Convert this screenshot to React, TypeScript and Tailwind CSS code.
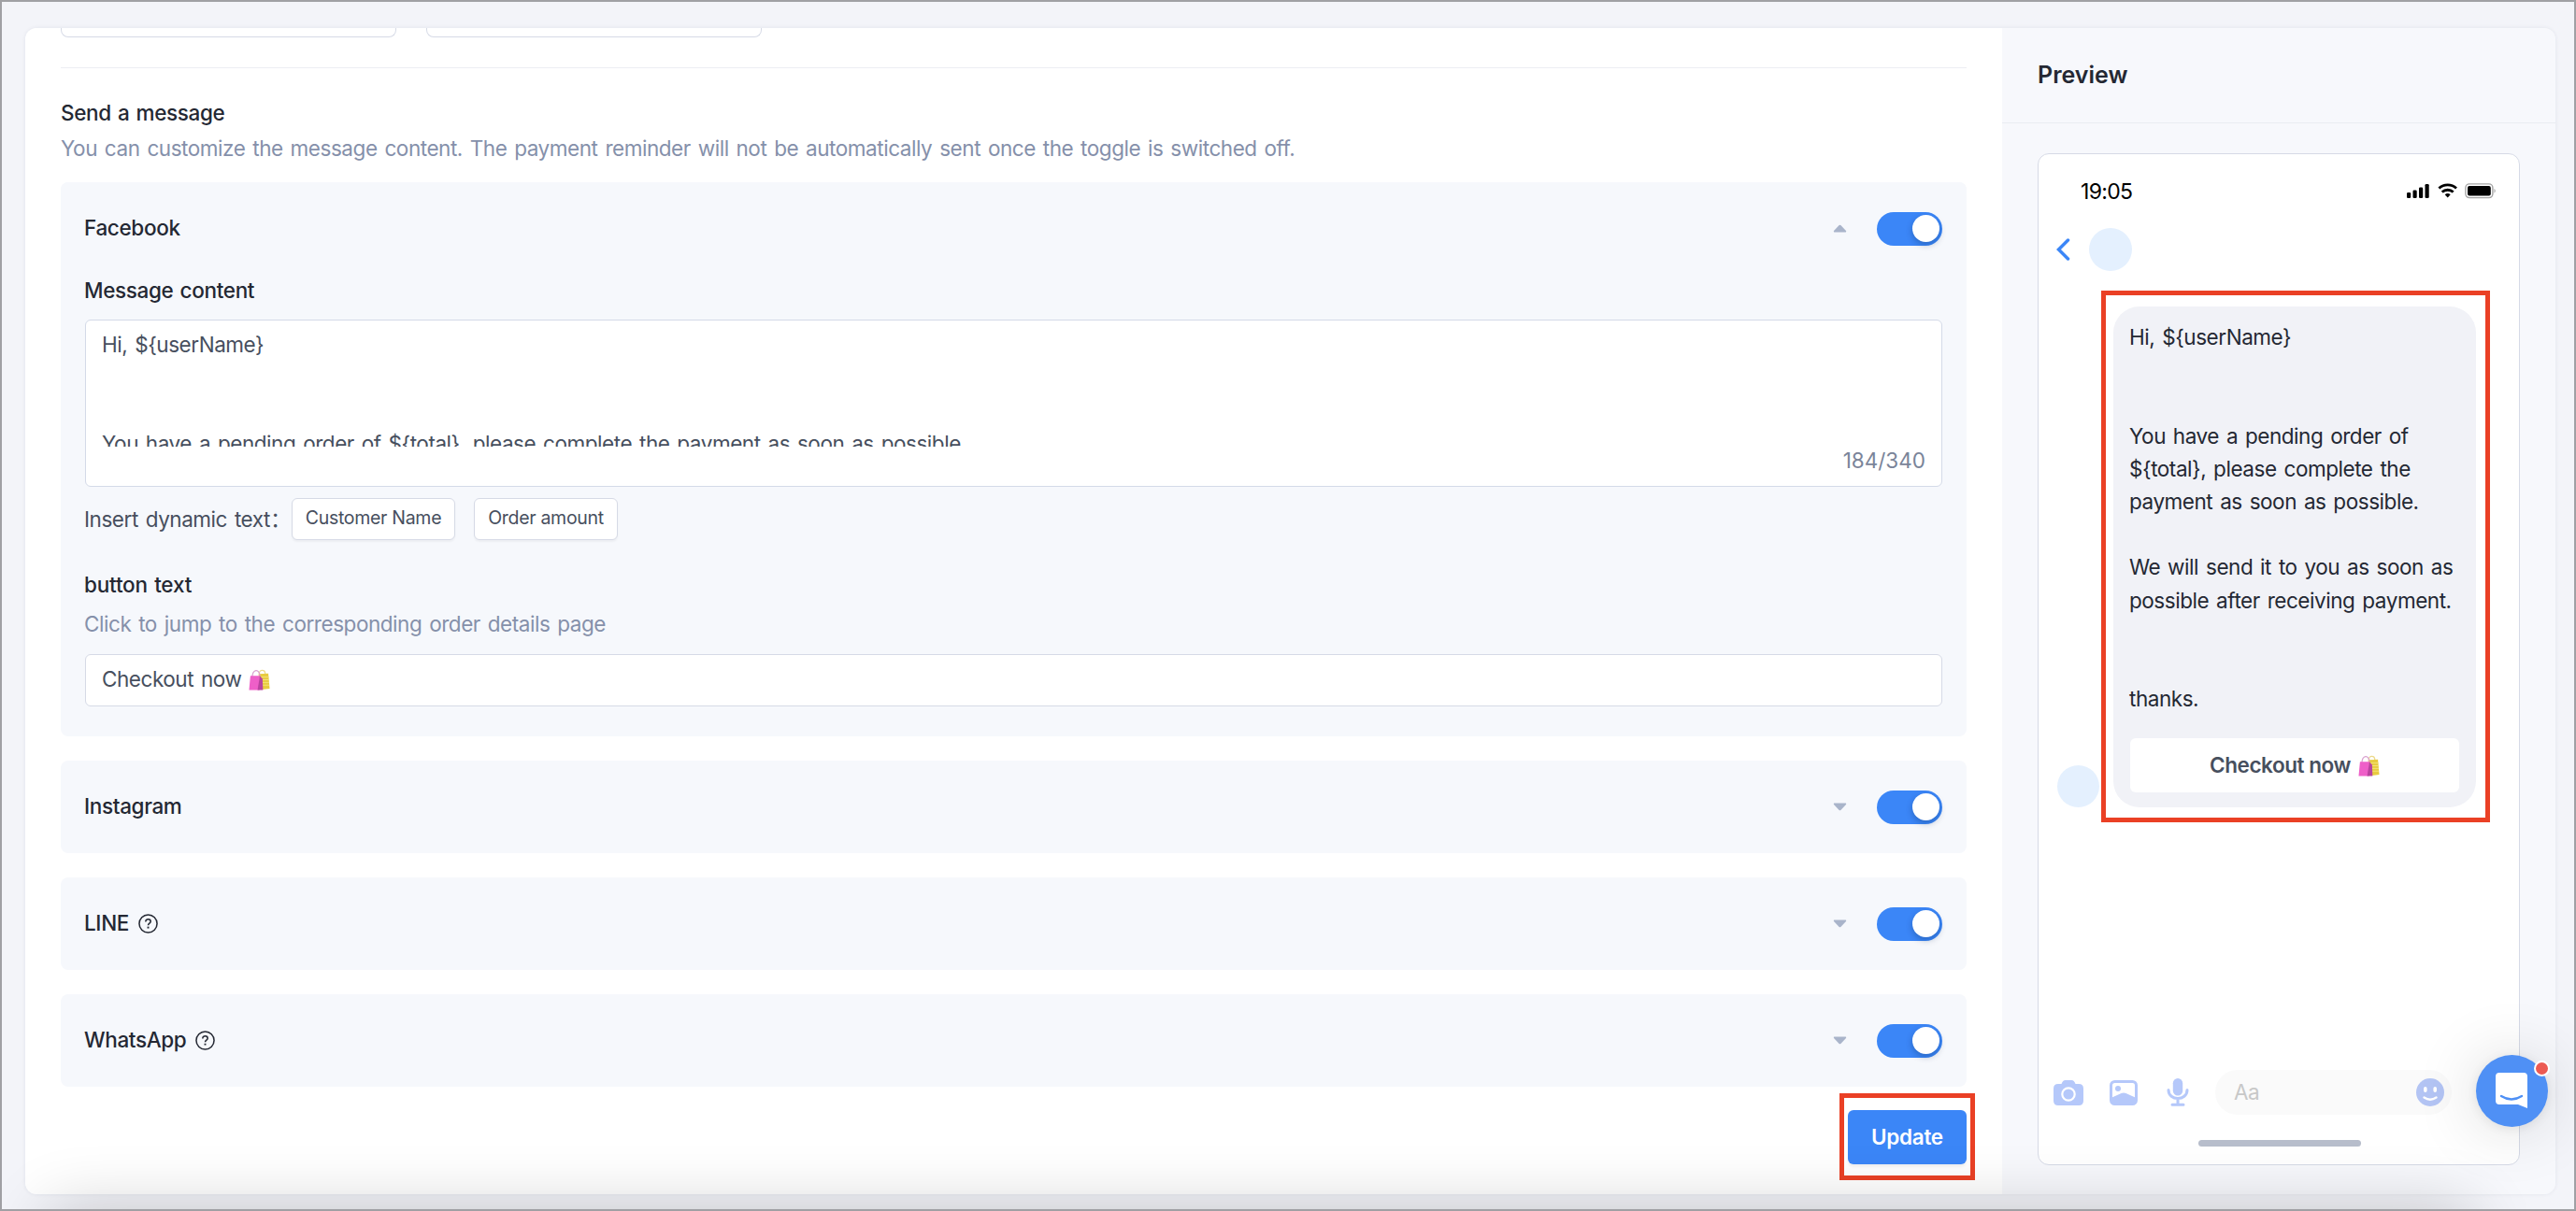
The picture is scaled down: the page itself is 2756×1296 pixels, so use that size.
import { clsx } from 'clsx';

const DESCRIPTION =
    'You can customize the message content. The payment reminder will not be automatically sent once the toggle is switched off.';

interface ChannelProps {
    name: string;
    help?: boolean;
    open?: boolean;
}

function Toggle() {
    return (
        <button className="flex h-9 w-[70px] items-center justify-end rounded-full bg-[#3b86f7] pr-[3px]">
            <span className="size-[29px] rounded-full bg-white shadow-[0_3px_7px_rgba(0,35,80,0.3)]" />
        </button>
    );
}

function HelpIcon() {
    return (
        <svg viewBox="0 0 22 22" className="size-[21px]" fill="none" stroke="#242833" strokeWidth="1.6">
            <circle cx="11" cy="11" r="10" />
            <path d="M8.2 8.8c0-3.7 5.6-3.4 5.6-.2 0 2-2.8 2-2.8 4.200" />
            <path d="M11 14.300v2" strokeWidth="2" />
        </svg>
    );
}

function Caret({ up }: { up?: boolean }) {
    return (
        <svg viewBox="0 0 16 10" className={clsx('h-[9px] w-[15px]', up && 'rotate-180')} fill="#a9b4ca">
            <path d="M1.2.5h13.6q1.2.3.4 1.6L9 8.8q-1 1-2 0L.8 2.1Q0 .8 1.2.5z" />
        </svg>
    );
}

function ChannelHeader({ name, help, open }: ChannelProps) {
    return (
        <div className="flex h-[99px] items-center rounded-lg bg-[#f6f8fc] pr-[26px] pl-[25px]">
            <span className="mb-px text-[22.5px] font-medium tracking-[-0.35px]">{name}</span>
            {help && <span className="ml-[10px]"><HelpIcon /></span>}
            <div className="ml-auto flex items-center gap-8">
                <Caret up={open} />
                <Toggle />
            </div>
        </div>
    );
}

function BagEmoji() {
    return (
        <svg viewBox="0 0 24 24" className="inline-block size-[23px] shrink-0" fill="none">
            <path d="M12 8V4.5c0-4 6-4 6.500 0V8" stroke="#ecd98a" strokeWidth="1.3" />
            <path d="M11 5.500l11-.5 1.500 17-9.500 1z" fill="#e8cb3f" />
            <path d="M14 9h8.500M14 12h8.800M14 15h9M14 18h9" stroke="#f5e27a" />
            <path d="M4 9c.5-9 8-10 8.500-1" stroke="#d9a0cf" strokeWidth="1.3" />
            <path d="M2 7.500h10.500L12 23.500H.5z" fill="#ee5fc8" />
            <path d="M12.500 7.500l3 3.500.5 12.500h-6z" fill="#b8439f" />
        </svg>
    );
}

function SettingsForm() {
    return (
        <main className="flex w-[2115px] flex-col bg-white px-[38px]">
            <div className="flex h-[10px] gap-8">
                <div className="w-[359px] rounded-b-lg border border-t-0 border-[#d6dae6]" />
                <div className="w-[359px] rounded-b-lg border border-t-0 border-[#d6dae6]" />
            </div>
            <hr className="mt-8 border-[#eceef3]" />
            <h2 className="mt-8 text-[22.5px] leading-8 font-medium tracking-[-0.35px] [word-spacing:1.5px]">Send a message</h2>
            <p className="mt-[6px] text-[22.5px] leading-8 whitespace-nowrap text-[#8590aa]">{DESCRIPTION}</p>

            <section className="mt-[20px] h-[593px] rounded-lg bg-[#f6f8fc]">
                <ChannelHeader name="Facebook" open />
                <div className="px-[26px]">
                    <h3 className="mt-px -ml-px text-[22.5px] leading-8 font-medium tracking-[-0.35px] [word-spacing:1.5px]">Message content</h3>
                    <div className="mt-[15px] h-[179px] rounded-md border border-[#d4dae8] bg-white px-[17px] pt-2 text-[22.5px] text-[#474f5e]">
                        <div className="h-[127px] overflow-hidden leading-[35.2px] whitespace-pre-line">
                            {'Hi, ${userName}\n\n\nYou have a pending order of ${total}, please complete the payment as soon as possible.'}
                        </div>
                        <div className="text-right leading-[30px] tracking-normal text-[#7a8499]">184/340</div>
                    </div>
                    <div className="mt-3 flex h-[45px] text-[22.5px] text-[#474f5e]">
                        <span className="mt-[7px] -ml-px w-[222px] leading-8 whitespace-nowrap">Insert dynamic text：</span>
                        <button className="mr-5 w-[175px] rounded-md border border-[#d6dae6] bg-white pb-[2px] text-[19.5px] tracking-[-0.3px] shadow-[0_2px_2px_rgba(0,0,0,0.04)]">Customer Name</button>
                        <button className="w-[154px] rounded-md border border-[#d6dae6] bg-white pb-[2px] text-[19.5px] tracking-[-0.3px] shadow-[0_2px_2px_rgba(0,0,0,0.04)]">Order amount</button>
                    </div>
                    <h3 className="mt-[32px] -ml-px text-[22.5px] leading-8 font-medium tracking-[-0.2px] [word-spacing:1.5px]">button text</h3>
                    <p className="mt-[10px] -ml-px text-[22.5px] leading-8 text-[#8590aa]">Click to jump to the corresponding order details page</p>
                    <div className="mt-[16px] flex h-14 items-center gap-2 rounded-md border border-[#d6dae6] bg-white px-[17px] pb-[2px] text-[22.5px] text-[#474f5e]">
                        <span>Checkout now</span>
                        <BagEmoji />
                    </div>
                </div>
            </section>

            <div className="mt-[26px] flex flex-col gap-[26px]">
                <ChannelHeader name="Instagram" />
                <ChannelHeader name="LINE" help />
                <ChannelHeader name="WhatsApp" help />
            </div>

            <div className="mt-[7px] -mr-[9px] ml-auto h-[93px] w-[145px] border-[5px] border-[#ea4025] px-1 py-[13px]">
                <button className="h-[58px] w-[127px] rounded-md bg-[#3b86f7] text-[22.5px] font-semibold tracking-[-0.3px] text-white shadow-[0_3px_3px_rgba(0,0,0,0.05)]">
                    Update
                </button>
            </div>
        </main>
    );
}

function StatusIcons() {
    return (
        <svg viewBox="0 0 96 26" className="h-[26px] w-24">
            <g>
                <rect x="0" y="14" width="4.200" height="6" rx="1.300" />
                <rect x="6.500" y="11.500" width="4.200" height="8.500" rx="1.300" />
                <rect x="13" y="8.500" width="4.200" height="11.500" rx="1.300" />
                <rect x="19.500" y="5" width="4.200" height="15" rx="1.300" />
            </g>
            <g fill="none" stroke="#000" strokeWidth="2.800">
                <path d="M34.400 9.600a13.500 13.500 0 0 1 18.600 0" />
                <path d="M37.700 13.600a8.800 8.800 0 0 1 12 0" />
            </g>
            <path d="M40.700 16.200q3-2.400 6 0L43.700 19.600z" />
            <rect x="62.900" y="4.900" width="29" height="14.700" rx="4" fill="none" stroke="#a5a5a5" strokeWidth="1.400" />
            <rect x="65" y="7" width="24.800" height="10.500" rx="2" />
            <path d="M93.500 9.800q2.500 2.500 0 5z" fill="#a5a5a5" />
        </svg>
    );
}

function MessageBubble() {
    return (
        <div className="h-[569px] w-[416px] border-[5px] border-[#ea4025] px-2 py-3">
            <div className="flex h-[536px] w-[388px] flex-col rounded-[28px] bg-[#f1f2f7] px-[18px] pt-[15px]">
                <p className="-ml-px h-[447px] text-[22.5px] leading-[35.2px] whitespace-pre">
                    {'Hi, ${userName}\n\n\nYou have a pending order of\n${total}, please complete the\npayment as soon as possible.\n\nWe will send it to you as soon as\npossible after receiving payment.\n\n\nthanks.'}
                </p>
                <button className="flex h-[58px] items-center justify-center gap-2 rounded-md bg-white text-[22.5px] font-semibold text-[#474f5e]">
                    <span>Checkout now</span>
                    <BagEmoji />
                </button>
            </div>
        </div>
    );
}

function InputBar() {
    return (
        <div className="flex h-12 items-center pl-4">
            <svg viewBox="0 0 32 27" className="h-[27px] w-8">
                <path d="M5 4h3.500q1.500-4 4-4h7q2.500 0 4 4H27q5 0 5 5v13q0 5-5 5H5q-5 0-5-5V9q0-5 5-5z" fill="#b5c8fa" />
                <circle cx="16" cy="15" r="6.700" fill="none" stroke="#fff" strokeWidth="2.200" />
            </svg>
            <svg viewBox="0 0 30 27" className="ml-7 h-[27px] w-[30px]">
                <rect x="1.500" y="1.500" width="27" height="24" rx="4" fill="#fff" stroke="#b5c8fa" strokeWidth="3" />
                <circle cx="9" cy="9" r="3" fill="#b5c8fa" />
                <path d="M1.500 19l11-5q2.500-1 5 0l11 5v4q0 3-3 3h-21q-3 0-3-3z" fill="#b5c8fa" />
            </svg>
            <svg viewBox="0 0 24 30" className="ml-[31px] h-[30px] w-6" stroke="#b5c8fa" strokeWidth="3" strokeLinecap="round" fill="none">
                <rect x="6.800" y="0" width="10.400" height="18.500" rx="5.200" fill="#b5c8fa" stroke="none" />
                <path d="M2 12.500c0 12 20 12 20 0M12 22v5M6 28.300h12" />
            </svg>
            <div className="ml-7 flex h-12 w-[253px] items-center justify-between rounded-full bg-[#fafafa] pr-2 pl-5 text-[22.5px] text-[#c8c8c8]">
                Aa
                <svg viewBox="0 0 30 30" className="size-[30px]">
                    <circle cx="15" cy="15" r="15" fill="#b3c4f4" />
                    <path d="M9.800 10.800v2.400M20.200 10.800v2.400" stroke="#fff" strokeWidth="3.600" strokeLinecap="round" />
                    <path d="M8.500 20.500q6.500 4.500 13 0" stroke="#fff" strokeWidth="2.400" strokeLinecap="round" fill="none" />
                </svg>
            </div>
        </div>
    );
}

function PhonePreview() {
    return (
        <aside className="flex w-[592px] flex-col bg-[#f7f8fc]">
            <h2 className="h-[102px] border-b border-[#eaecf2] pt-[31px] pl-[38px] text-[25px] leading-[38px] font-semibold tracking-normal">Preview</h2>
            <div className="mt-8 ml-[38px] flex h-[1083px] w-[516px] flex-col rounded-xl border border-[#d6dae6] bg-white">
                <div className="mt-[26px] flex h-7 items-center justify-between pr-[24px] pl-[45px]">
                    <span className="text-[23px] tracking-[-0.7px] text-black">19:05</span>
                    <StatusIcons />
                </div>
                <div className="mt-[25px] flex h-[46px] items-center">
                    <svg viewBox="0 0 16 24" className="ml-[18px] h-6 w-4" fill="none" stroke="#3b86f7" strokeWidth="3.5" strokeLinecap="round">
                        <path d="M13.500 2L3.500 12l10 10" />
                    </svg>
                    <span className="ml-[20px] size-[46px] rounded-full bg-[#e4f0fe]" />
                </div>
                <div className="mt-[21px] flex items-end pl-5">
                    <span className="mr-[2px] mb-4 size-[45px] rounded-full bg-[#e4f0fe]" />
                    <MessageBubble />
                </div>
                <div className="mt-auto">
                    <InputBar />
                    <div className="mt-[27px] mb-[19px] ml-[171px] h-[7px] w-[174px] rounded-full bg-[#b7bdcb]" />
                </div>
            </div>
        </aside>
    );
}

function ChatLauncher() {
    return (
        <button className="absolute top-[1127px] left-[2647px] size-[77px] rounded-full bg-[#4f90f5] shadow-[0_2px_70px_rgba(0,0,0,0.16),0_2px_12px_rgba(0,0,0,0.08)]">
            <svg viewBox="0 0 77 77" className="size-[77px]">
                <path d="M25 19h26q4 0 4 4v34l-10-4H25q-4 0-4-4V23q0-4 4-4z" fill="#fff" />
                <path d="M27 44q11 7 22 0" fill="none" stroke="#4f90f5" strokeWidth="2.4" strokeLinecap="round" />
            </svg>
            <span className="absolute top-[6px] right-[-2px] size-[17px] rounded-full border-2 border-white bg-[#ec5a52]" />
        </button>
    );
}

export default function App() {
    return (
        <div className="relative h-[1296px] w-[2756px] overflow-hidden border-2 border-[#a0a0a4] bg-[#f3f4f9] pt-7 pl-[25px] font-['Inter','Noto_Sans_CJK_SC',sans-serif] tracking-[-0.45px] text-[#242833] [word-spacing:2px]">
            <div className="flex h-[1248px] w-[2707px] overflow-hidden rounded-xl shadow-[0_0_4px_rgba(30,40,80,0.08)]">
                <SettingsForm />
                <PhonePreview />
            </div>
            {/* Soft shade rising from the bottom edge */}
            <div className="pointer-events-none absolute top-full right-[110px] left-[50px] h-20 shadow-[0_0_70px_rgba(0,0,0,0.2)]" />
            <ChatLauncher />
        </div>
    );
}
